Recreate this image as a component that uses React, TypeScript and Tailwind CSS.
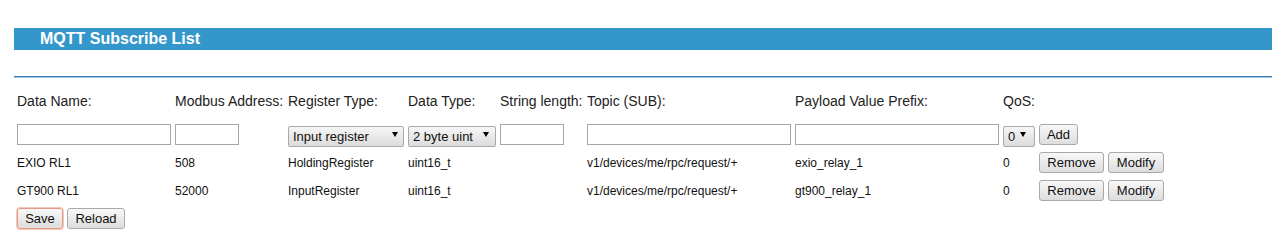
import React from "react";

const font = { fontFamily: '"Liberation Sans", Arial, sans-serif' };

function Btn({ children, w, focus }: { children: React.ReactNode; w: string; focus?: boolean }) {
  return (
    <button
      className={
        "h-[21px] rounded-[3px] border text-[13px] leading-[19px] text-[#111] bg-gradient-to-b from-[#f8f8f8] to-[#dddddd] shrink-0 " +
        w +
        (focus ? " border-[#e39a85] shadow-[0_0_0_1px_#f3c9bb]" : " border-[#a9a9a9]")
      }
    >
      {children}
    </button>
  );
}

function Sel({ text, w, arrowRight }: { text: string; w: string; arrowRight: string }) {
  return (
    <div className={"relative h-[21px] shrink-0 " + w}>
      <select className="appearance-none w-full h-full rounded-[2px] border border-[#a9a9a9] bg-gradient-to-b from-[#f6f6f6] to-[#dcdcdc] pl-[4px] text-[13px] leading-[19px] text-[#111] outline-none">
        <option>{text}</option>
      </select>
      <span
        className={
          "pointer-events-none absolute top-[8px] w-0 h-0 border-l-[3px] border-r-[3px] border-t-[5px] border-l-transparent border-r-transparent border-t-black " +
          arrowRight
        }
      />
    </div>
  );
}

function Inp({ w }: { w: string }) {
  return <input className={"h-[21px] shrink-0 border border-[#a6a6a6] bg-white " + w} />;
}

const cols = ["w-[158px]", "w-[113px]", "w-[120px]", "w-[92px]", "w-[87px]", "w-[208px]", "w-[208px]", "w-[36px]"];

function DataRow({ v }: { v: string[] }) {
  return (
    <div className="flex items-center h-[22px] text-[12px] text-[#111]">
      {v.map((t, i) => (
        <div key={i} className={"shrink-0 pt-[1px] " + cols[i]}>
          {t}
        </div>
      ))}
      <div className="flex gap-[4px]">
        <Btn w="w-[65px]">Remove</Btn>
        <Btn w="w-[56px]">Modify</Btn>
      </div>
    </div>
  );
}

export default function App() {
  const labels = [
    "Data Name:",
    "Modbus Address:",
    "Register Type:",
    "Data Type:",
    "String length:",
    "Topic (SUB):",
    "Payload Value Prefix:",
    "QoS:",
  ];
  return (
    <div className="bg-white w-[1280px] h-[242px] pt-[28px] pl-[14px] pr-[8px]" style={font}>
      <div className="h-[22px] bg-[#3497cb] pl-[26px] text-[16px] leading-[22px] font-bold text-white">
        MQTT Subscribe List
      </div>
      <div className="mt-[26px] h-[2px] border-t border-[#3a7db3] bg-[#9cc3e2]" />
      <div className="pl-[3px]">
        <div className="mt-[12px] flex items-center h-[22px] text-[14px] text-[#222]">
          {labels.map((l, i) => (
            <div key={i} className={"shrink-0 whitespace-nowrap " + cols[i]}>
              {l}
            </div>
          ))}
        </div>
        <div className="mt-[12px] flex items-center h-[21px]">
          <div className={"shrink-0 " + cols[0]}>
            <Inp w="w-[154px]" />
          </div>
          <div className={"shrink-0 " + cols[1]}>
            <Inp w="w-[64px]" />
          </div>
          <div className={"shrink-0 " + cols[2]}>
            <Sel text="Input register" w="w-[116px]" arrowRight="right-[6px]" />
          </div>
          <div className={"shrink-0 " + cols[3]}>
            <Sel text="2 byte uint" w="w-[88px]" arrowRight="right-[7px]" />
          </div>
          <div className={"shrink-0 " + cols[4]}>
            <Inp w="w-[64px]" />
          </div>
          <div className={"shrink-0 " + cols[5]}>
            <Inp w="w-[204px]" />
          </div>
          <div className={"shrink-0 " + cols[6]}>
            <Inp w="w-[204px]" />
          </div>
          <div className={"shrink-0 " + cols[7]}>
            <Sel text="0" w="w-[32px]" arrowRight="right-[9px]" />
          </div>
          <Btn w="w-[39px]">Add</Btn>
        </div>
        <div className="mt-[6px]">
          <DataRow v={["EXIO RL1", "508", "HoldingRegister", "uint16_t", "", "v1/devices/me/rpc/request/+", "exio_relay_1", "0"]} />
        </div>
        <div className="mt-[6px]">
          <DataRow v={["GT900 RL1", "52000", "InputRegister", "uint16_t", "", "v1/devices/me/rpc/request/+", "gt900_relay_1", "0"]} />
        </div>
        <div className="mt-[7px] flex gap-[4px]">
          <Btn w="w-[46px]" focus>
            Save
          </Btn>
          <Btn w="w-[58px]">Reload</Btn>
        </div>
      </div>
    </div>
  );
}
